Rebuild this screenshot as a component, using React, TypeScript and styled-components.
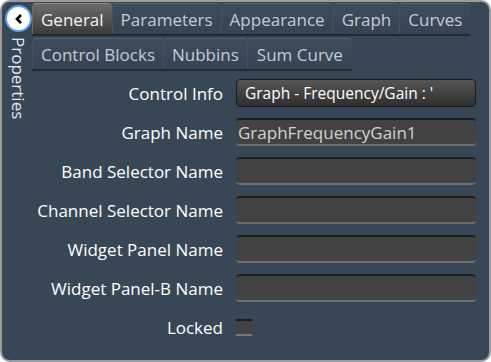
import React from 'react';
import styled, { createGlobalStyle } from 'styled-components';

const GlobalStyle = createGlobalStyle`
  html, body {
    margin: 0;
    padding: 0;
    background: #ffffff;
  }
  body {
    font-family: "Open Sans", "Noto Sans", sans-serif;
  }
`;

const Frame = styled.div`
  box-sizing: border-box;
  width: 491px;
  height: 362px;
  display: flex;
  background: #384756;
  border: 2px solid #9b9b9b;
  border-radius: 10px;
  overflow: hidden;
`;

const Sidebar = styled.div`
  width: 30px;
  display: flex;
  flex-direction: column;
  align-items: center;
  padding-top: 3px;
  gap: 5px;
`;

const BackButton = styled.button`
  width: 27px;
  height: 27px;
  padding: 0;
  border-radius: 50%;
  border: 2px solid #5b9cf0;
  background: #ffffff;
  display: flex;
  align-items: center;
  justify-content: center;
  margin-left: 3px;
`;

const SideTitle = styled.div`
  writing-mode: vertical-rl;
  color: #e4e8ee;
  font-size: 17px;
  line-height: 20px;
  margin-left: 2px;
`;

const Main = styled.div`
  flex: 1;
  display: flex;
  flex-direction: column;
  padding-top: 1px;
`;

const TabRow = styled.div`
  box-sizing: border-box;
  display: flex;
  align-self: flex-start;
  height: 33px;
  border-bottom: 2px solid #1f2833;
  margin-bottom: 2px;
`;

const Tab = styled.div<{ $active?: boolean; $pad?: number }>`
  box-sizing: border-box;
  height: 100%;
  padding: 0 ${(p) => p.$pad ?? 8}px;
  display: flex;
  align-items: center;
  font-size: 17px;
  color: ${(p) => (p.$active ? '#f4f4f4' : '#c3ccd6')};
  border-top: 1px solid ${(p) => (p.$active ? '#8a8a8a' : '#55636f')};
  border-left: 1px solid ${(p) => (p.$active ? '#6a6a6a' : '#44525f')};
  border-radius: 4px 4px 0 0;
  background: ${(p) =>
    p.$active
      ? 'linear-gradient(#6b6b6b, #3b3b3b)'
      : 'linear-gradient(#3d4c5b, #364452)'};
`;

const Form = styled.div`
  display: grid;
  grid-template-columns: 1fr 240px;
  column-gap: 13px;
  row-gap: 11px;
  grid-auto-rows: 28px;
  padding: 6px 13px 0 0;
`;

const Label = styled.div`
  display: flex;
  align-items: center;
  justify-content: flex-end;
  color: #ffffff;
  font-size: 17px;
`;

const InfoButton = styled.div`
  box-sizing: border-box;
  display: flex;
  align-items: center;
  padding-left: 8px;
  color: #ffffff;
  font-size: 15.5px;
  border-radius: 4px;
  border: 1px solid #1c1c1c;
  background: linear-gradient(#555555, #2f2f2f);
`;

const TextField = styled.div`
  box-sizing: border-box;
  display: flex;
  align-items: center;
  padding-left: 2px;
  color: #d2d2d2;
  font-size: 17px;
  background: #424242;
  border-radius: 4px;
  border-top: 2px solid #1e1e1e;
  border-bottom: 2px solid #6e6e6e;
`;

const CheckCell = styled.div`
  display: flex;
  align-items: center;
`;

const CheckBox = styled.div`
  box-sizing: border-box;
  width: 16px;
  height: 17px;
  background: #424242;
  border-top: 2px solid #1e1e1e;
  border-bottom: 2px solid #777777;
`;

const fields = [
  { label: 'Graph Name', value: 'GraphFrequencyGain1' },
  { label: 'Band Selector Name', value: '' },
  { label: 'Channel Selector Name', value: '' },
  { label: 'Widget Panel Name', value: '' },
  { label: 'Widget Panel-B Name', value: '' },
];

export default function App() {
  return (
    <>
      <GlobalStyle />
      <Frame>
        <Sidebar>
          <BackButton>
            <svg width="12" height="12" viewBox="0 0 12 12">
              <path d="M8 2 L4 6 L8 10" stroke="#000" strokeWidth="2.6" fill="none" />
            </svg>
          </BackButton>
          <SideTitle>Properties</SideTitle>
        </Sidebar>
        <Main>
          <TabRow>
            <Tab $active>General</Tab>
            <Tab>Parameters</Tab>
            <Tab>Appearance</Tab>
            <Tab>Graph</Tab>
            <Tab>Curves</Tab>
          </TabRow>
          <TabRow>
            <Tab>Control Blocks</Tab>
            <Tab>Nubbins</Tab>
            <Tab $pad={9}>Sum Curve</Tab>
          </TabRow>
          <Form>
            <Label>Control Info</Label>
            <InfoButton>Graph - Frequency/Gain : '</InfoButton>
            {fields.map((f) => (
              <React.Fragment key={f.label}>
                <Label>{f.label}</Label>
                <TextField>{f.value}</TextField>
              </React.Fragment>
            ))}
            <Label>Locked</Label>
            <CheckCell>
              <CheckBox />
            </CheckCell>
          </Form>
        </Main>
      </Frame>
    </>
  );
}
